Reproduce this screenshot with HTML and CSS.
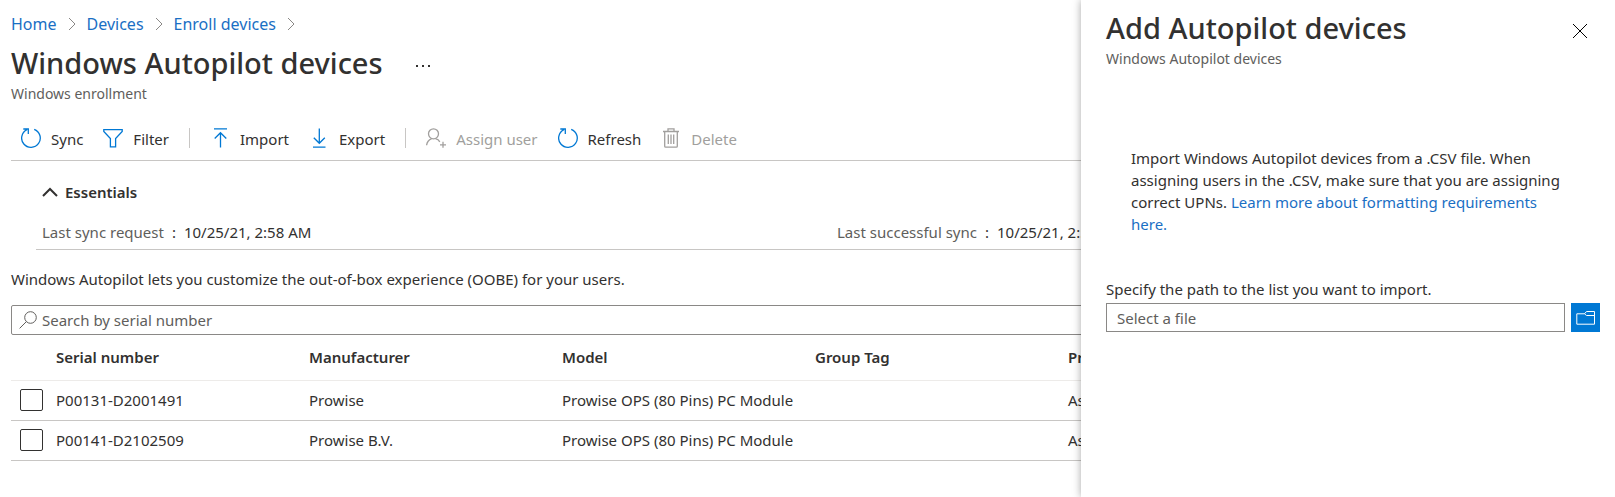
FILE: index.html
```
<!DOCTYPE html>
<html lang="en">

<head>
  <meta charset="utf-8">
  <meta name="viewport" content="width=device-width, initial-scale=1.0">
  <title>Windows Autopilot devices</title>
  <link rel="stylesheet" href="styles.css">
</head>

<body>

<main class="blade">
  <nav class="breadcrumb">
    <a href="#">Home</a>
    <svg class="chevron" viewBox="0 0 8 14"><path d="M1 1l6 6-6 6"/></svg>
    <a href="#">Devices</a>
    <svg class="chevron" viewBox="0 0 8 14"><path d="M1 1l6 6-6 6"/></svg>
    <a href="#">Enroll devices</a>
    <svg class="chevron" viewBox="0 0 8 14"><path d="M1 1l6 6-6 6"/></svg>
  </nav>

  <div class="title_row">
    <h1>Windows Autopilot devices</h1>
    <button class="more" aria-label="More">
      <svg width="16" height="4" viewBox="0 0 16 4"><path d="M1 1h2v2h-2zM7 1h2v2h-2zM13 1h2v2h-2z"/></svg>
    </button>
  </div>
  <div class="subtitle">Windows enrollment</div>

  <div class="toolbar">
    <button class="tool">
      <svg class="icon" viewBox="0 0 20 20"><path d="M13.2 1.3A9.3 9.3 0 1 1 6 1.6M2.3 1h5v5"/></svg>
      Sync
    </button>
    <button class="tool">
      <svg class="icon" viewBox="0 0 20 20"><path d="M.8 1.6h18.4v1.8l-6.6 7.2v8.2H7.4v-8.2L.8 3.4z"/></svg>
      Filter
    </button>
    <span class="divider"></span>
    <button class="tool">
      <svg class="icon" viewBox="0 0 20 20"><path d="M4 .8h13M10.5 19.5V4.8M4.7 10.5l5.8-5.8 5.8 5.8"/></svg>
      Import
    </button>
    <button class="tool">
      <svg class="icon" viewBox="0 0 20 20"><path d="M4 19.2h12.5M10.3.5v14.7M4.8 9.8l5.5 5.5 5.5-5.5"/></svg>
      Export
    </button>
    <span class="divider"></span>
    <button class="tool" disabled>
      <svg class="icon" viewBox="0 0 20 20"><circle cx="7.5" cy="5.8" r="5"/><path d="M.6 17.2c.4-3.6 2.4-5.4 5-6.6M9.5 10.6c2 .5 3.5 1.7 4.3 3.3M17 13.8v6M14 16.8h6"/></svg>
      Assign user
    </button>
    <button class="tool">
      <svg class="icon" viewBox="0 0 20 20"><path d="M13.2 1.3A9.3 9.3 0 1 1 6 1.6M2.3 1h5v5"/></svg>
      Refresh
    </button>
    <button class="tool" disabled>
      <svg class="icon" viewBox="0 0 20 20"><path d="M2 3.5h16M7 3.5V.8h6v2.7M3.7 3.5v14.7q0 1 1 1h10.6q1 0 1-1V3.5M7.3 6.5V16M10 6.5V16M12.7 6.5V16"/></svg>
      Delete
    </button>
  </div>

  <section class="essentials">
    <button class="essentials_toggle">
      <svg width="16" height="10" viewBox="0 0 16 10"><path d="M1 9l7-7 7 7"/></svg>
      Essentials
    </button>
    <dl class="essentials_grid">
      <div>
        <dt>Last sync request</dt>
        <dd>10/25/21, 2:58 AM</dd>
      </div>
      <div>
        <dt>Last successful sync</dt>
        <dd>10/25/21, 2:58 AM</dd>
      </div>
    </dl>
  </section>

  <p class="intro">Windows Autopilot lets you customize the out-of-box experience (OOBE) for your users.</p>

  <div class="search">
    <svg width="18" height="18" viewBox="0 0 18 18"><circle cx="11.5" cy="6.5" r="5.8"/><path d="M7.4 10.6L.6 17.4"/></svg>
    <input type="text" placeholder="Search by serial number" aria-label="Search by serial number">
  </div>

  <table class="devices">
    <colgroup>
      <col class="col_check">
      <col class="col_data">
      <col class="col_data">
      <col class="col_data">
      <col class="col_data">
      <col>
    </colgroup>
    <thead>
      <tr>
        <td></td>
        <th>Serial number</th>
        <th>Manufacturer</th>
        <th>Model</th>
        <th>Group Tag</th>
        <th>Profile status</th>
      </tr>
    </thead>
    <tbody>
      <tr>
        <td><input type="checkbox" aria-label="P00131-D2001491"></td>
        <td>P00131-D2001491</td>
        <td>Prowise</td>
        <td>Prowise OPS (80 Pins) PC Module</td>
        <td></td>
        <td>Assigned</td>
      </tr>
      <tr>
        <td><input type="checkbox" aria-label="P00141-D2102509"></td>
        <td>P00141-D2102509</td>
        <td>Prowise B.V.</td>
        <td>Prowise OPS (80 Pins) PC Module</td>
        <td></td>
        <td>Assigned</td>
      </tr>
    </tbody>
  </table>
</main>

<aside class="panel">
  <header class="panel_header">
    <div>
      <h2>Add Autopilot devices</h2>
      <div class="subtitle">Windows Autopilot devices</div>
    </div>
    <button class="close" aria-label="Close">
      <svg width="16" height="16" viewBox="0 0 16 16"><path d="M1 1l14 14M15 1L1 15"/></svg>
    </button>
  </header>

  <p class="panel_text">Import Windows Autopilot devices from a .CSV file. When assigning users in the .CSV, make sure that you are assigning correct UPNs. <a href="#">Learn more about formatting requirements here.</a></p>

  <label for="file_path">Specify the path to the list you want to import.</label>
  <div class="file_row">
    <input type="text" id="file_path" placeholder="Select a file">
    <button class="browse" aria-label="Browse">
      <svg width="20" height="16" viewBox="0 0 20 16"><path d="M.8 3.8h7.7l2-2.300h8v12.700H.8zM8.500 3.800l2 1.700h8"/></svg>
    </button>
  </div>
</aside>

</body>

</html>
```
FILE: styles.css
```
* {
  box-sizing: border-box;
}

body {
  margin: 0;
  min-height: 100vh;
  position: relative;
  overflow-x: hidden;
  background-color: #fff;
  color: #323130;
  font-family: "Noto Sans", "Open Sans", sans-serif;
  font-size: 15px;
  line-height: 22px;
}

h1, h2 {
  margin: 0;
  font-size: 29px;
  font-weight: 500;
  line-height: 40px;
  white-space: nowrap;
}

a {
  color: #1a6fc4;
  text-decoration: none;
}

button {
  border: none;
  padding: 0;
  background: none;
  color: inherit;
  font: inherit;
}

input {
  font: inherit;
  color: inherit;
}

input::placeholder {
  color: #605e5c;
  opacity: 1;
}

svg {
  display: block;
  flex: none;
  fill: none;
  stroke: currentColor;
}

.blade {
  padding: 13px 11px 0;
}

.breadcrumb {
  display: flex;
  align-items: center;
  gap: 11px;
  font-size: 16px;
}

.chevron {
  width: 8px;
  height: 14px;
  color: #8a8886;
}

.title_row {
  display: flex;
  align-items: center;
  gap: 32px;
  margin-top: 8px;
}

.more {
  padding-top: 5px;
}

.more svg {
  fill: #323130;
  stroke: none;
}

.subtitle {
  color: #605e5c;
  font-size: 14px;
}

.toolbar {
  display: flex;
  align-items: center;
  gap: 20px;
  height: 44px;
  margin-top: 12px;
  padding-left: 10px;
  border-bottom: 1px solid #c8c6c4;
}

.tool {
  display: flex;
  align-items: center;
  gap: 10px;
}

.tool:disabled {
  color: #a19f9d;
}

.icon {
  width: 20px;
  height: 20px;
  margin-bottom: 2px;
  color: #0078d4;
  stroke-width: 1.3;
}

.tool:disabled .icon {
  color: #a19f9d;
}

.divider {
  width: 1px;
  height: 20px;
  margin-bottom: 2px;
  background-color: #c8c6c4;
}

.essentials {
  margin-left: 25px;
  padding: 20px 0 6px 6px;
  border-bottom: 1px solid #c8c6c4;
}

.essentials_toggle {
  display: flex;
  align-items: center;
  gap: 7px;
  font-weight: 600;
}

.essentials_toggle svg {
  stroke-width: 2;
}

.essentials_grid {
  display: grid;
  grid-template-columns: 1fr 1fr;
  gap: 28px;
  margin: 18px 0 0;
}

.essentials_grid div {
  display: flex;
}

.essentials_grid dt {
  color: #605e5c;
}

.essentials_grid dd {
  margin: 0;
}

.essentials_grid dd::before {
  content: ":";
  margin: 0 8px;
}

.intro {
  margin: 18px 0 15px;
}

.search {
  display: flex;
  align-items: center;
  gap: 5px;
  height: 30px;
  padding: 0 7px;
  border: 1px solid #8a8886;
  border-radius: 2px;
}

.search svg {
  color: #605e5c;
}

.search input {
  flex: 1;
  border: none;
  padding: 0;
  outline: none;
}

.devices {
  width: 100%;
  table-layout: fixed;
  border-collapse: collapse;
}

.col_check {
  width: 45px;
}

.col_data {
  width: 253px;
}

.devices th,
.devices td {
  height: 40px;
  padding: 0;
  border-bottom: 1px solid #c8c6c4;
  text-align: left;
  white-space: nowrap;
}

.devices thead th,
.devices thead td {
  height: 45px;
  border-bottom-color: #edebe9;
  font-weight: 600;
}

.devices input {
  display: block;
  appearance: none;
  width: 23px;
  height: 22px;
  margin: 0 0 0 9px;
  border: 1px solid #323130;
  border-radius: 2px;
}

/* flyout over the right side of the blade */
.panel {
  position: absolute;
  top: 0;
  right: 0;
  bottom: 0;
  width: 534px;
  padding: 8px 15px 0 25px;
  background-color: #fff;
  box-shadow: 0 0 8px rgba(0, 0, 0, 0.35);
}

.panel_header {
  display: flex;
  justify-content: space-between;
  align-items: flex-start;
}

.close {
  margin: 15px 12px 0 0;
  color: #000;
}

.panel_text {
  margin: 77px 24px 43px 25px;
}

.file_row {
  display: flex;
  gap: 6px;
  margin-top: 3px;
}

.file_row input {
  flex: 1;
  height: 29px;
  padding: 0 10px;
  border: 1px solid #8a8886;
}

.browse {
  display: grid;
  place-items: center;
  width: 29px;
  height: 29px;
  background-color: #0078d4;
  color: #fff;
}
```
